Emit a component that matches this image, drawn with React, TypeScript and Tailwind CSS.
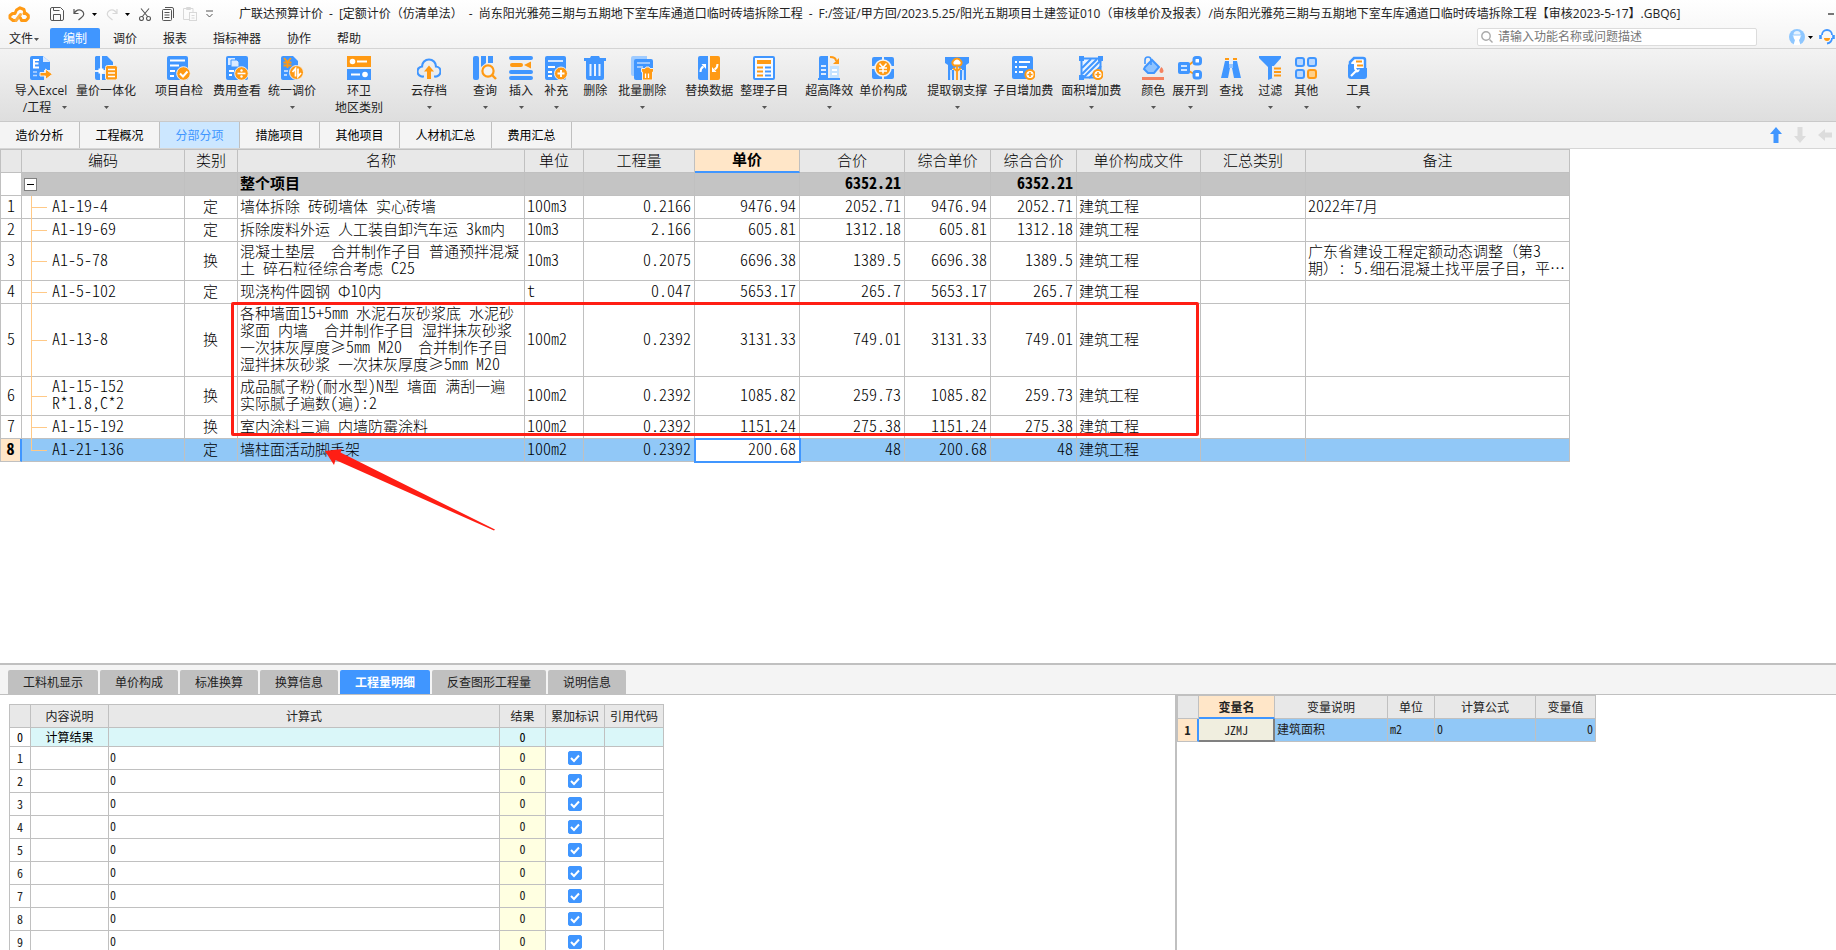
import type { ReactNode } from "react";
import { clsx } from "clsx";

const BLUE = "#4096ff";
const ORANGE = "#ff9a14";

/* ---------- small helpers ---------- */

// Grid text: latin runs are set in half-width glyphs so that digits line up.
function GridText({ text }: { text: string }) {
    const parts = text.split(/([\x20-\x7eΦ≥]+)/).filter(Boolean);
    return (
        <>
            {parts.map((part, i) =>
                /^[\x20-\x7eΦ≥]+$/.test(part) ? (
                    <span
                        key={i}
                        className="font-['Noto_Sans_CJK_SC',sans-serif] text-[16px] leading-3 [font-feature-settings:'hwid']"
                    >
                        {part}
                    </span>
                ) : (
                    <span key={i}>{part}</span>
                )
            )}
        </>
    );
}

function Caret({ className = "text-[#555]" }: { className?: string }) {
    return (
        <svg width="5" height="3" viewBox="0 0 5 3" className={className}>
            <path d="M0 0h5L2.5 3z" fill="currentColor" />
        </svg>
    );
}

function Icon({ children }: { children: ReactNode }) {
    return (
        <svg width="24" height="24" viewBox="0 0 24 24" fill="none">
            {children}
        </svg>
    );
}

/* ---------- ribbon icons ---------- */

const icons = {
    excel: (
        <Icon>
            <path d="M3 0h11l7 6v8h-6v10H3a2 2 0 0 1-2-2V2a2 2 0 0 1 2-2z" fill={BLUE} />
            <path d="M14 0v6h7z" fill="#dbeaff" />
            <path d="M10 4H5v7.500h5M5 7.500h4.500" stroke="#fff" strokeWidth="2" />
            <path d="M4 16h4M4 19.500h4" stroke="#b9d8ff" strokeWidth="1.500" />
            <path d="M11 16.500h5.500V13l7 5.200-7 5.300V20H11z" fill={ORANGE} stroke="#f0f0f0" />
        </Icon>
    ),
    integrate: (
        <Icon>
            <path d="M2 0h4v24H3a2 2 0 0 1-2-2V1zM8 0h5l6 6v8H8z" fill={BLUE} />
            <path d="M7 0v24M1 15h11" stroke="#eaf3ff" strokeWidth="2" />
            <rect x="4.500" y="12.500" width="5" height="5" fill="#fff" />
            <path d="M8 18h4v6H8z" fill={BLUE} />
            <rect x="11.500" y="9.500" width="12" height="14.500" rx="2" fill={ORANGE} stroke="#f0f0f0" />
            <path d="M14 13.500h7M14 17h7M14 20.500h7" stroke="#fff" strokeWidth="1.500" />
        </Icon>
    ),
    check: (
        <Icon>
            <rect x="0" y="0" width="21" height="24" rx="2" fill={BLUE} />
            <path d="M3 4.500h15M3 9.500h9M3 15h5M3 20h4" stroke="#fff" strokeWidth="1.800" />
            <circle cx="16.500" cy="17.500" r="6.800" fill={ORANGE} stroke="#f0f0f0" />
            <path d="m13 17.500 3 3 4.500-5" stroke="#fff" strokeWidth="2" />
        </Icon>
    ),
    fee: (
        <Icon>
            <rect x="1" y="0" width="22" height="24" rx="2" fill={BLUE} />
            <path d="M3 2h7v7H3z" fill="#dbeaff" />
            <path d="M6 4h6l2 2v5H6z" fill="#dbeaff" stroke={BLUE} />
            <path d="M4 15h5M4 19h3" stroke="#fff" strokeWidth="1.800" />
            <circle cx="16.500" cy="17.500" r="6.800" fill={ORANGE} stroke="#f0f0f0" />
            <path d="M12.500 17.500h8" stroke="#fff" strokeWidth="1.600" />
            <circle cx="16.500" cy="14.500" r="1.200" fill="#fff" />
            <circle cx="16.500" cy="20.500" r="1.200" fill="#fff" />
        </Icon>
    ),
    adjust: (
        <Icon>
            <path d="M3 0h10l5 5v19H3a2 2 0 0 1-2-2V2a2 2 0 0 1 2-2z" fill={BLUE} />
            <path d="m4 2 3.500 4L11 2M3.500 6.500h8M3.500 9.500h8M7.500 6v6" stroke={ORANGE} strokeWidth="1.800" />
            <path d="M4 15h4M4 19h3" stroke="#b9d8ff" strokeWidth="1.800" />
            <circle cx="16.500" cy="16.500" r="7" fill={ORANGE} stroke="#f0f0f0" />
            <path d="M15.500 20.500v-8l-3 3.500M18 12.500v8l3-3.500" stroke="#fff" strokeWidth="1.700" />
        </Icon>
    ),
    region: (
        <Icon>
            <path d="M0 0h24v11H0z" fill={ORANGE} />
            <path d="M0 13h24v11H0z" fill={BLUE} />
            <circle cx="5.500" cy="5.500" r="2.800" fill="#fff" />
            <path d="M10 5.500h10M4 18.500h9" stroke="#fff" strokeWidth="2" />
            <circle cx="18" cy="18.500" r="2.800" fill="#fff" />
        </Icon>
    ),
    cloud: (
        <Icon>
            <path
                d="M7 20.500H6A5 5 0 0 1 5 10.500a7 7 0 0 1 14 0 5 5 0 0 1-1 10h-1"
                stroke={BLUE}
                strokeWidth="2.200"
            />
            <path d="m12 9.500 5 6h-3V23h-4v-7.500H7z" fill={ORANGE} />
        </Icon>
    ),
    query: (
        <Icon>
            <rect x="0" y="0" width="6" height="24" rx="2" fill={BLUE} />
            <path d="M8 0h5v7l-5 4zM15 0h5v7h-5z" fill={BLUE} />
            <circle cx="15" cy="15" r="5.600" stroke={ORANGE} strokeWidth="2.200" fill="#f3f3f3" />
            <path d="m19 19 4 4" stroke={ORANGE} strokeWidth="2.400" />
        </Icon>
    ),
    insert: (
        <Icon>
            <path d="M2 2h20M2 16h20M2 22h20" stroke={BLUE} strokeWidth="4" strokeLinecap="round" />
            <path d="M3 9h9" stroke={ORANGE} strokeWidth="4" strokeLinecap="round" />
            <path d="m22 5.500-7 3.500 7 3.500z" fill={ORANGE} />
        </Icon>
    ),
    add: (
        <Icon>
            <rect x="1" y="0" width="21" height="24" rx="2" fill={BLUE} />
            <path d="M4 5h15" stroke="#fff" strokeWidth="1.500" />
            <path d="M4 11h7M4 16h4M4 20h4" stroke="#fff" strokeWidth="1.800" />
            <circle cx="17" cy="17.500" r="6.500" fill={ORANGE} stroke="#f0f0f0" />
            <path d="M13.500 17.500h7M17 14v7" stroke="#fff" strokeWidth="2" />
        </Icon>
    ),
    remove: (
        <Icon>
            <path d="M1 2h6l1-2h8l1 2h6v3H1zM3 5h18v17a2 2 0 0 1-2 2H5a2 2 0 0 1-2-2z" fill={BLUE} />
            <path d="M7.500 8v12M12 8v12M16.500 8v12" stroke="#e8f2ff" strokeWidth="2" />
        </Icon>
    ),
    batch: (
        <Icon>
            <path d="M3 0h14v20H3a2 2 0 0 1-2-2V2a2 2 0 0 1 2-2z" fill="#9fcbff" />
            <path d="M6 3h15a2 2 0 0 1 2 2v15l-5 4H6a2 2 0 0 1-2-2V5a2 2 0 0 1 2-2z" fill={BLUE} />
            <path d="M7 7h13M7 11h6" stroke="#b9d8ff" strokeWidth="1.500" />
            <path d="M11.500 12.500h3.500l1-1.500h3l1 1.500h3.500V16h-1v8h-10v-8h-1z" fill={ORANGE} stroke="#f0f0f0" />
            <path d="M15.500 17.500v4.500M18.500 17.500v4.500" stroke="#fff" strokeWidth="1.300" />
        </Icon>
    ),
    replace: (
        <Icon>
            <path d="M3 0h8v24H3a2 2 0 0 1-2-2V2a2 2 0 0 1 2-2z" fill={BLUE} />
            <path d="M13 0h8a2 2 0 0 1 2 2v20a2 2 0 0 1-2 2h-8z" fill={ORANGE} />
            <path d="M3.500 16c0-3 1-4.500 3-5.500M20.500 8c0 3-1 4.500-3 5.500" stroke="#fff" strokeWidth="2" />
            <path d="M4.500 8H9v5zM19.500 16H15v-5z" fill="#fff" />
        </Icon>
    ),
    organize: (
        <Icon>
            <rect x="2" y="1" width="20" height="22" rx="1" fill="#f6faff" stroke={BLUE} strokeWidth="2" />
            <path d="M5 6h14" stroke={ORANGE} strokeWidth="4" />
            <path d="M5 11.500h6M5 15.500h6M5 19.500h6" stroke={ORANGE} strokeWidth="1.800" />
            <path d="M13 11.500h6M13 15.500h6M13 19.500h6" stroke={BLUE} strokeWidth="1.800" />
        </Icon>
    ),
    highrise: (
        <Icon>
            <path d="M2 2a2 2 0 0 1 2-2h7v22H2z" fill={BLUE} />
            <path d="M4 10h5M4 14h5M4 18h5" stroke="#dbeaff" strokeWidth="2" />
            <path d="M13 10h9v12h-9z" fill="#c5e3ff" />
            <path d="M15 14h5M15 18h5" stroke="#fff" strokeWidth="2" />
            <path d="M1 23h22" stroke={BLUE} strokeWidth="2" />
            <path d="M13 1c4 0 6 1.500 6 4" stroke={ORANGE} strokeWidth="2" />
            <path d="M22 2v6h-6z" fill={ORANGE} />
        </Icon>
    ),
    price: (
        <Icon>
            <path d="M3 1h8v4l2 0V1h8a2 2 0 0 1 2 2v7h-3v3h3v8a2 2 0 0 1-2 2h-8v-4h-2v4H3a2 2 0 0 1-2-2v-8h3v-3H1V3a2 2 0 0 1 2-2z" fill={BLUE} />
            <circle cx="12" cy="12" r="8" fill={ORANGE} stroke="#f3f3f3" strokeWidth="1.500" />
            <path d="m8.500 7.500 3.500 4 3.500-4M8 12h8M8 15h8M12 11.500v6" stroke="#fff" strokeWidth="1.500" />
        </Icon>
    ),
    steel: (
        <Icon>
            <path d="M0 1h24v6l-3 2v15h-3l-1-10-4-3h-2l-4 3-1 10H3V9L0 7z" fill={BLUE} />
            <path d="M6 14v10M18 14v10" stroke="#eaf3ff" strokeWidth="1.500" />
            <path d="M7 13h10v11H7z" fill="#ececec" />
            <path d="M8 24V14M16 24V14" stroke={BLUE} strokeWidth="2" />
            <path d="M9 9.500a3 3 0 0 1-.5-5 4 4 0 0 1 7 0 3 3 0 0 1-.5 5z" fill="#fff" stroke={ORANGE} strokeWidth="2" />
            <path d="M12 10v14M8 12l4 3 4-3" stroke={ORANGE} strokeWidth="1.800" />
        </Icon>
    ),
    itemFee: (
        <Icon>
            <rect x="1" y="0" width="21" height="23" rx="2" fill={BLUE} />
            <path d="M4 6h2M8 6h11M4 11h2M8 11h8M4 16h2M8 16h4" stroke="#fff" strokeWidth="1.800" />
            <circle cx="19" cy="18.500" r="4.600" fill="#fff" stroke={ORANGE} strokeWidth="2" />
            <path d="M16.500 18.500h5M19 16v5" stroke={ORANGE} strokeWidth="1.600" />
        </Icon>
    ),
    areaFee: (
        <Icon>
            <rect x="2.500" y="2.500" width="19" height="19" fill="#e9f3ff" stroke={BLUE} strokeWidth="2" />
            <path d="M3 12 12 3M3 18 18 3M4 22 22 4M10 22 22 10" stroke={BLUE} strokeWidth="2" />
            <path d="M0 0h5v5H0zM19 0h5v5h-5zM0 19h5v5H0z" fill={BLUE} />
            <circle cx="19" cy="18.500" r="4.600" fill="#fff" stroke={ORANGE} strokeWidth="2" />
            <path d="M16.500 18.500h5M19 16v5" stroke={ORANGE} strokeWidth="1.600" />
        </Icon>
    ),
    paint: (
        <Icon>
            <path d="m4 11 7-7 7 7-5 6H7l-4-4z" fill="#8ec3ff" stroke={BLUE} strokeWidth="2" />
            <path d="M4 8V4a3 3 0 0 1 6 0v5" stroke={BLUE} strokeWidth="1.600" />
            <path d="M20.500 11c1.500 2 2 3 2 4a2 2 0 0 1-4 0c0-1 .5-2 2-4z" fill="#f5825f" />
            <path d="M1 22.500h22" stroke="#f5825f" strokeWidth="3" />
        </Icon>
    ),
    expand: (
        <Icon>
            <path d="M11 9l5-4M11 15l5 3" stroke={ORANGE} strokeWidth="1.800" />
            <rect x="0" y="6" width="12" height="12" rx="2" fill={BLUE} />
            <path d="M3 10h6M3 14h6" stroke="#cfe4ff" strokeWidth="2" />
            <rect x="16" y="1.500" width="6.500" height="6.500" rx="2" fill="#fff" stroke={BLUE} strokeWidth="3" />
            <rect x="16" y="15.500" width="6.500" height="6.500" rx="2" fill="#fff" stroke={BLUE} strokeWidth="3" />
        </Icon>
    ),
    find: (
        <Icon>
            <path d="M6 3h4M14 3h4" stroke={ORANGE} strokeWidth="2" />
            <path d="M6 5h4v3h4V5h4l4 17h-7l-2-10h-2L9 22H2z" fill={BLUE} />
            <path d="M11 3v9M13 3v9" stroke="#e6f1ff" />
        </Icon>
    ),
    filter: (
        <Icon>
            <path d="M1 0h22v2l-8 9v11l-5 2V11L1 2z" fill={BLUE} />
            <path d="M14 10h9v12h-9z" fill="#ececec" />
            <path d="M16 12.500h7M16 16h7M16 19.500h7" stroke={ORANGE} strokeWidth="2" />
        </Icon>
    ),
    other: (
        <Icon>
            <rect x="2" y="2" width="8" height="8" rx="2" fill="#b9d8ff" stroke={BLUE} strokeWidth="2" />
            <rect x="14" y="2" width="8" height="8" rx="2" fill="#b9d8ff" stroke={BLUE} strokeWidth="2" />
            <rect x="2" y="14" width="8" height="8" rx="2" fill="#b9d8ff" stroke={BLUE} strokeWidth="2" />
            <rect x="14" y="14" width="8" height="8" rx="2" fill="#ffd08a" stroke={ORANGE} strokeWidth="2" />
        </Icon>
    ),
    tools: (
        <Icon>
            <path d="M4 12V6l4-4h9a2 2 0 0 1 2 2v9" fill="#fff" stroke={BLUE} strokeWidth="2.500" />
            <path d="M10 5.500h6M11 9.500h6" stroke={ORANGE} strokeWidth="1.800" />
            <path d="M3 8h5v4h13v8a3 3 0 0 1-3 3H5a3 3 0 0 1-3-3V9z" fill={BLUE} />
            <path d="m5 20 5-5" stroke="#fff" strokeWidth="2.200" />
            <path d="M8 13c0-2 2-3 3.500-2.500L10 12l1.500 2 2-1c.5 2-1 3.500-3 3.500z" fill="#fff" />
        </Icon>
    ),
};

/* ---------- data ---------- */

type Tool = {
    icon: keyof typeof icons;
    label: string;
    sub?: string;
    menu?: boolean;
    space: string;
};

const tools: Tool[] = [
    { icon: "excel", label: "导入Excel", sub: "/工程", menu: true, space: "ml-[11px] w-[60px]" },
    { icon: "integrate", label: "量价一体化", menu: true, space: "ml-[5px]" },
    { icon: "check", label: "项目自检", space: "ml-[19px]" },
    { icon: "fee", label: "费用查看", space: "ml-[10px]" },
    { icon: "adjust", label: "统一调价", menu: true, space: "ml-[7px]" },
    { icon: "region", label: "环卫", sub: "地区类别", space: "ml-[19px]" },
    { icon: "cloud", label: "云存档", menu: true, space: "ml-[28px]" },
    { icon: "query", label: "查询", menu: true, space: "ml-[26px]" },
    { icon: "insert", label: "插入", menu: true, space: "ml-[12px]" },
    { icon: "add", label: "补充", menu: true, space: "ml-[11px]" },
    { icon: "remove", label: "删除", space: "ml-[15px]" },
    { icon: "batch", label: "批量删除", menu: true, space: "ml-[11px]" },
    { icon: "replace", label: "替换数据", space: "ml-[19px]" },
    { icon: "organize", label: "整理子目", menu: true, space: "ml-[7px]" },
    { icon: "highrise", label: "超高降效", menu: true, space: "ml-[17px]" },
    { icon: "price", label: "单价构成", space: "ml-[6px]" },
    { icon: "steel", label: "提取钢支撑", menu: true, space: "ml-[20px]" },
    { icon: "itemFee", label: "子目增加费", space: "ml-[6px]" },
    { icon: "areaFee", label: "面积增加费", menu: true, space: "ml-[8px]" },
    { icon: "paint", label: "颜色", menu: true, space: "ml-[20px]" },
    { icon: "expand", label: "展开到", menu: true, space: "ml-[7px]" },
    { icon: "find", label: "查找", space: "ml-[11px]" },
    { icon: "filter", label: "过滤", menu: true, space: "ml-[15px]" },
    { icon: "other", label: "其他", menu: true, space: "ml-[12px]" },
    { icon: "tools", label: "工具", menu: true, space: "ml-[28px]" },
];

const menus = ["编制", "调价", "报表", "指标神器", "协作", "帮助"];

const pages = ["造价分析", "工程概况", "分部分项", "措施项目", "其他项目", "人材机汇总", "费用汇总"];

const details = ["工料机显示", "单价构成", "标准换算", "换算信息", "工程量明细", "反查图形工程量", "说明信息"];

const columns = [
    { title: "", width: "w-[21px]" },
    { title: "编码", width: "w-[163px]" },
    { title: "类别", width: "w-[53px]" },
    { title: "名称", width: "w-[287px]" },
    { title: "单位", width: "w-[59px]" },
    { title: "工程量", width: "w-[111px]" },
    { title: "单价", width: "w-[105px]" },
    { title: "合价", width: "w-[105px]" },
    { title: "综合单价", width: "w-[86px]" },
    { title: "综合合价", width: "w-[86px]" },
    { title: "单价构成文件", width: "w-[124px]" },
    { title: "汇总类别", width: "w-[105px]" },
    { title: "备注", width: "w-[264px]" },
];

type Item = {
    code: string;
    kind: string;
    name: string;
    unit: string;
    qty: string;
    price: string;
    total: string;
    note?: string;
    height: string;
};

const items: Item[] = [
    { code: "A1-19-4", kind: "定", name: "墙体拆除 砖砌墙体 实心砖墙", unit: "100m3", qty: "0.2166", price: "9476.94", total: "2052.71", note: "2022年7月", height: "h-[23px]" },
    { code: "A1-19-69", kind: "定", name: "拆除废料外运 人工装自卸汽车运 3km内", unit: "10m3", qty: "2.166", price: "605.81", total: "1312.18", height: "h-[23px]" },
    { code: "A1-5-78", kind: "换", name: "混凝土垫层  合并制作子目 普通预拌混凝\n土 碎石粒径综合考虑 C25", unit: "10m3", qty: "0.2075", price: "6696.38", total: "1389.5", note: "广东省建设工程定额动态调整（第3\n期）: 5.细石混凝土找平层子目，平⋯", height: "h-[39px]" },
    { code: "A1-5-102", kind: "定", name: "现浇构件圆钢 Φ10内", unit: "t", qty: "0.047", price: "5653.17", total: "265.7", height: "h-[23px]" },
    { code: "A1-13-8", kind: "换", name: "各种墙面15+5mm 水泥石灰砂浆底 水泥砂\n浆面 内墙  合并制作子目 湿拌抹灰砂浆\n一次抹灰厚度≥5mm M20  合并制作子目\n湿拌抹灰砂浆 一次抹灰厚度≥5mm M20", unit: "100m2", qty: "0.2392", price: "3131.33", total: "749.01", height: "h-[73px]" },
    { code: "A1-15-152\nR*1.8,C*2", kind: "换", name: "成品腻子粉(耐水型)N型 墙面 满刮一遍\n实际腻子遍数(遍):2", unit: "100m2", qty: "0.2392", price: "1085.82", total: "259.73", height: "h-[39px]" },
    { code: "A1-15-192", kind: "换", name: "室内涂料三遍 内墙防霉涂料", unit: "100m2", qty: "0.2392", price: "1151.24", total: "275.38", height: "h-[23px]" },
    { code: "A1-21-136", kind: "定", name: "墙柱面活动脚手架", unit: "100m2", qty: "0.2392", price: "200.68", total: "48", height: "h-[23px]" },
];

/* ---------- header ---------- */

function QuickBar() {
    return (
        <div className="flex w-[239px] shrink-0 items-center text-[#555]">
            <svg className="ml-2" width="22" height="17" viewBox="0 0 22 17" fill="none" stroke={ORANGE} strokeWidth="3" strokeLinecap="round" strokeLinejoin="round">
                <path d="M7 14.500H5L2 12V9.500L4.500 7.500H7L8.500 4 12 1.800 16 3.500l1 4" />
                <path d="M8 14.500 12.500 8.500" stroke="#ffad3d" />
                <path d="M16 7.500h2l2.300 2V12L18 14.500h-4.500L12.500 12" />
            </svg>
            <button aria-label="保存" className="ml-5">
                <svg width="14" height="14" viewBox="0 0 14 14" fill="none" stroke="currentColor">
                    <path d="M.5 3V2A1.500 1.500 0 0 1 2 .5h8.500l3 3v8.500a1.500 1.500 0 0 1-1.500 1.500H2A1.500 1.500 0 0 1 .5 12z" />
                    <path d="M3.500.5v3h6M3.500 13V7.500h7V13" />
                </svg>
            </button>
            <button aria-label="撤销" className="ml-[9px]">
                <svg width="12" height="13" viewBox="0 0 12 13" fill="none" stroke="currentColor" strokeWidth="1.200">
                    <path d="M1 1v4.500h4.500M1 5.500C3 2 6 1 8.500 2.500c3 2 3 5 0 7L5.500 12" />
                </svg>
            </button>
            <button aria-label="撤销列表" className="ml-[7px]">
                <Caret className="text-black" />
            </button>
            <button aria-label="重做" className="ml-[9px] text-[#d8d8d8]">
                <svg width="12" height="13" viewBox="0 0 12 13" fill="none" stroke="currentColor" strokeWidth="1.200">
                    <path d="M11 1v4.500H6.500M11 5.500C9 2 6 1 3.500 2.500c-3 2-3 5 0 7L6.500 12" />
                </svg>
            </button>
            <button aria-label="重做列表" className="ml-[7px]">
                <Caret className="text-black" />
            </button>
            <button aria-label="剪切" className="ml-[9px]">
                <svg width="12" height="13" viewBox="0 0 12 13" fill="none" stroke="currentColor" strokeWidth="1.100">
                    <path d="M2 .5 9 9M10 .5 3 9" />
                    <circle cx="2.500" cy="10.500" r="2" />
                    <circle cx="9.500" cy="10.500" r="2" />
                </svg>
            </button>
            <button aria-label="复制" className="ml-[11px]">
                <svg width="12" height="14" viewBox="0 0 12 14" fill="none" stroke="currentColor">
                    <path d="M3 .5h7A1.500 1.500 0 0 1 11.500 2v9" />
                    <rect x=".5" y="2.500" width="9" height="11" rx="1" />
                    <path d="M2.500 5.500h5M2.500 8h5M2.500 10.500h5" />
                </svg>
            </button>
            <button aria-label="粘贴" className="ml-[9px] text-[#d8d8d8]">
                <svg width="14" height="14" viewBox="0 0 14 14" fill="none" stroke="currentColor">
                    <path d="M6 12.500H.5v-11H10V5M3.500.5h4v2h-4z" />
                    <rect x="6.500" y="5.500" width="7" height="8" />
                    <path d="M8.500 8.500h3M8.500 11h3" />
                </svg>
            </button>
            <button aria-label="更多" className="ml-[9px]">
                <svg width="7" height="8" viewBox="0 0 7 8" fill="none" stroke="currentColor">
                    <path d="M0 1h7M.5 4l3 3 3-3" />
                </svg>
            </button>
        </div>
    );
}

function Header() {
    return (
        <header className="bg-linear-to-b from-white to-[#f3f3f3]">
            <div className="flex h-7 items-center">
                <QuickBar />
                <h1 className="flex flex-1 gap-1.5 whitespace-nowrap">
                    <span>广联达预算计价</span>
                    <span>-</span>
                    <span>[定额计价（仿清单法）</span>
                    <span>-</span>
                    <span>尚东阳光雅苑三期与五期地下室车库通道口临时砖墙拆除工程</span>
                    <span>-</span>
                    <span>
                        F:/签证/甲方回/2023.5.25/阳光五期项目土建签证010（审核单价及报表）/尚东阳光雅苑三期与五期地下室车库通道口临时砖墙拆除工程【审核2023-5-17】.GBQ6]
                    </span>
                </h1>
                <button aria-label="最小化" className="mr-0.5 h-0.5 w-1.5 bg-[#777]" />
            </div>
            <div className="flex h-[21px] border-b border-[#d4d4d4]">
                <button className="flex w-[50px] items-center gap-px pt-0.5 pl-[9px]">
                    文件
                    <Caret />
                </button>
                {menus.map((menu, i) => (
                    <button
                        key={menu}
                        className={clsx("px-[13px] pt-0.5", i === 0 && "rounded-t-xs bg-[#4096ff] text-white")}
                    >
                        {menu}
                    </button>
                ))}
                <label className="ml-auto flex h-[18px] w-[280px] items-center rounded-xs border border-[#dcdcdc] bg-white pl-[3px]">
                    <svg width="12" height="12" viewBox="0 0 12 12" fill="none" stroke="#aaa" strokeWidth="1.400">
                        <circle cx="5" cy="5" r="4.200" />
                        <path d="m8.500 8.500 3 3" />
                    </svg>
                    <input
                        aria-label="搜索"
                        placeholder="请输入功能名称或问题描述"
                        className="ml-[5px] h-4 flex-1 bg-transparent outline-none placeholder:text-[#777]"
                    />
                </label>
                <div className="ml-8 flex h-[18px] items-center">
                    <button aria-label="账户">
                        <svg width="16" height="16" viewBox="0 0 16 16">
                            <circle cx="8" cy="8" r="8" fill="#8ec7ff" />
                            <path d="M3.500 6.500h9l-1 1c0 2-1 3-1.500 3.500l1.500 5h-7L6 11C5.500 10.500 4.500 9.500 4.500 7.500z" fill="#fff" />
                            <path d="M4.500 5.500a3.500 3.500 0 0 1 7 0z" fill="#e6f3ff" />
                        </svg>
                    </button>
                    <span className="ml-[3px]">
                        <Caret className="text-black" />
                    </span>
                    <button aria-label="客服" className="mr-px ml-[6px]">
                        <svg width="16" height="16" viewBox="0 0 16 16" fill="none">
                            <path d="M3 6a5 5 0 0 1 10 0M13 9c0 3-2 5-5 5.500" stroke={BLUE} strokeWidth="1.800" />
                            <path d="M1.500 6v4M14.500 6v4" stroke={BLUE} strokeWidth="2.600" />
                            <path d="M5 9h6a3 3 0 0 1-6 0z" fill={ORANGE} />
                        </svg>
                    </button>
                </div>
            </div>
        </header>
    );
}

function Ribbon() {
    return (
        <div className="flex h-[73px] items-start border-b border-[#c9c9c9] bg-linear-to-b from-[#f3f3f3] to-[#dedede] pt-[7px]">
            {tools.map((tool) => (
                <button key={tool.label} className={clsx("flex shrink-0 flex-col items-center", tool.space)}>
                    {icons[tool.icon]}
                    <span className="mt-[3px] leading-4 whitespace-nowrap">{tool.label}</span>
                    <span className="flex h-[17px] items-center gap-[11px] leading-[17px] whitespace-nowrap">
                        {tool.sub && <span className={clsx(tool.menu && "ml-2")}>{tool.sub}</span>}
                        {tool.menu && <Caret />}
                    </span>
                </button>
            ))}
        </div>
    );
}

function PageTabs() {
    return (
        <nav className="flex h-[27px] border-b border-[#d6d6d6] bg-[#f4f4f4]">
            {pages.map((page, i) => (
                <button
                    key={page}
                    className={clsx(
                        "border-r border-[#c0c0c0] pt-0.5 text-center",
                        i === 5 ? "w-[92px]" : "w-20",
                        i === 2 ? "bg-[#cce7ff] text-[#4096ff]" : "text-black"
                    )}
                >
                    {page}
                </button>
            ))}
            <div className="mr-1 ml-auto flex items-center gap-3">
                <button aria-label="上移">
                    <svg width="12" height="16" viewBox="0 0 12 16">
                        <path d="m6 0 6 7H8.500v9h-5V7H0z" fill={BLUE} />
                    </svg>
                </button>
                <button aria-label="下移">
                    <svg width="12" height="16" viewBox="0 0 12 16">
                        <path d="m6 16 6-7H8.500V0h-5v9H0z" fill="#dcdcdc" />
                    </svg>
                </button>
                <button aria-label="左移">
                    <svg width="14" height="12" viewBox="0 0 14 12">
                        <path d="m0 6 7-6v3.500h7v5H7V12z" fill="#dcdcdc" />
                    </svg>
                </button>
            </div>
        </nav>
    );
}

/* ---------- main grid ---------- */

function TreeLine({ last }: { last: boolean }) {
    return (
        <>
            <span className={clsx("absolute top-0 left-[9px] w-px bg-[#ffc987]", last ? "h-1/2" : "-bottom-px")} />
            <span className="absolute top-1/2 left-[9px] h-px w-4 bg-[#ffc987]" />
        </>
    );
}

const cell = "border-r border-b border-[#c0c0c0] pt-0 pr-[3px] pb-0.5 pl-0.5";

function MainGrid() {
    return (
        <table className="w-[1570px] table-fixed border-separate border-spacing-0 border-t border-l border-[#c0c0c0] font-['Liberation_Sans','Noto_Sans_CJK_SC',sans-serif] text-[15px] leading-[17px] font-light text-black">
            <colgroup>
                {columns.map((column, i) => (
                    <col key={i} className={column.width} />
                ))}
            </colgroup>
            <thead>
                <tr className="h-[23px] bg-[#e8e8e8]">
                    {columns.map((column, i) => (
                        <th
                            key={i}
                            className={clsx(
                                "border-r border-[#c0c0c0] p-0 pb-0.5",
                                column.title === "单价"
                                    ? "border-b-2 border-b-[#4096ff] bg-[#ffe6c8] font-bold"
                                    : "border-b font-light"
                            )}
                        >
                            {column.title}
                        </th>
                    ))}
                </tr>
            </thead>
            <tbody>
                <tr className="h-[23px] bg-[#c4c4c4] font-bold">
                    <td className={clsx(cell, "bg-white")} />
                    <td className="border-r border-b border-[#c0c0c0] p-0 pl-[2px]">
                        <button aria-label="折叠" className="flex size-[13px] items-center justify-center border border-[#808080] bg-white">
                            <span className="h-px w-[7px] bg-black" />
                        </button>
                    </td>
                    <td className={cell} />
                    <td className={cell}>整个项目</td>
                    <td className={cell} />
                    <td className={cell} />
                    <td className={cell} />
                    <td className={clsx(cell, "text-right")}>
                        <GridText text="6352.21" />
                    </td>
                    <td className={cell} />
                    <td className={clsx(cell, "text-right")}>
                        <GridText text="6352.21" />
                    </td>
                    <td className={cell} />
                    <td className={cell} />
                    <td className={cell} />
                </tr>
                {items.map((item, i) => {
                    const selected = i === items.length - 1;
                    return (
                        <tr key={item.code} className={clsx(item.height, selected && "bg-[#91c8f7]")}>
                            <td
                                className={clsx(
                                    "border-b border-[#c0c0c0] p-0 pb-0.5 text-center",
                                    selected ? "border-r-2 border-r-[#4096ff] bg-[#ffe6c8] font-bold" : "border-r"
                                )}
                            >
                                <GridText text={String(i + 1)} />
                            </td>
                            <td className="relative border-r border-b border-[#c0c0c0] p-0 pb-0.5 pl-[30px] whitespace-pre">
                                <TreeLine last={selected} />
                                <GridText text={item.code} />
                            </td>
                            <td className={clsx(cell, "text-center")}>{item.kind}</td>
                            <td className={clsx(cell, "whitespace-pre")}>
                                <GridText text={item.name} />
                            </td>
                            <td className={cell}>
                                <GridText text={item.unit} />
                            </td>
                            <td className={clsx(cell, "text-right")}>
                                <GridText text={item.qty} />
                            </td>
                            <td
                                className={clsx(
                                    cell,
                                    "text-right",
                                    selected && "bg-white outline-2 -outline-offset-1 outline-[#4096ff]"
                                )}
                            >
                                <GridText text={item.price} />
                            </td>
                            <td className={clsx(cell, "text-right")}>
                                <GridText text={item.total} />
                            </td>
                            <td className={clsx(cell, "text-right")}>
                                <GridText text={item.price} />
                            </td>
                            <td className={clsx(cell, "text-right")}>
                                <GridText text={item.total} />
                            </td>
                            <td className={cell}>建筑工程</td>
                            <td className={cell} />
                            <td className={clsx(cell, "whitespace-pre")}>
                                <GridText text={item.note ?? ""} />
                            </td>
                        </tr>
                    );
                })}
            </tbody>
        </table>
    );
}

/* ---------- detail pane ---------- */

const half = "[font-feature-settings:'hwid']";

function QuantityTable() {
    const line = "border-r border-b border-[#c0c0c0] px-0 py-0";
    return (
        <table className="w-[655px] table-fixed border-separate border-spacing-0 border-t border-l border-[#c0c0c0] text-center">
            <colgroup>
                <col className="w-[21px]" />
                <col className="w-[78px]" />
                <col className="w-[391px]" />
                <col className="w-[46px]" />
                <col className="w-[59px]" />
                <col className="w-[59px]" />
            </colgroup>
            <thead>
                <tr className="h-[23px] bg-[#e8e8e8]">
                    {["", "内容说明", "计算式", "结果", "累加标识", "引用代码"].map((title) => (
                        <th key={title} className={clsx(line, "font-normal")}>
                            {title}
                        </th>
                    ))}
                </tr>
            </thead>
            <tbody className={half}>
                <tr className="h-[19px] bg-[#daf7f9] text-black">
                    <td className={clsx(line, "bg-white")}>0</td>
                    <td className={line}>计算结果</td>
                    <td className={line} />
                    <td className={line}>0</td>
                    <td className={line} />
                    <td className={line} />
                </tr>
                {[1, 2, 3, 4, 5, 6, 7, 8, 9].map((row) => (
                    <tr key={row} className="h-[23px]">
                        <td className={line}>{row}</td>
                        <td className={line} />
                        <td className={clsx(line, "pb-0.5 text-left")}>
                            <span className="pl-px">0</span>
                        </td>
                        <td className={clsx(line, "bg-[#ffffe1] pb-0.5")}>0</td>
                        <td className={line}>
                            <label className="relative mx-auto block size-3.5">
                                <input
                                    type="checkbox"
                                    defaultChecked
                                    aria-label={`累加标识 ${row}`}
                                    className="peer block size-3.5 appearance-none rounded-xs border border-[#4096ff] bg-white checked:bg-[#4096ff]"
                                />
                                <svg className="pointer-events-none absolute inset-0" width="14" height="14" viewBox="0 0 14 14" fill="none">
                                    <path d="m3 7 3 3 5-5.500" stroke="#fff" strokeWidth="2" />
                                </svg>
                            </label>
                        </td>
                        <td className={line} />
                    </tr>
                ))}
            </tbody>
        </table>
    );
}

function VariableTable() {
    const line = "border-r border-b border-[#c0c0c0] px-0.5 pt-0 pb-0.5";
    return (
        <table className="w-[419px] table-fixed border-separate border-spacing-0 border-t border-l border-[#c0c0c0]">
            <colgroup>
                <col className="w-[21px]" />
                <col className="w-[76px]" />
                <col className="w-[113px]" />
                <col className="w-[47px]" />
                <col className="w-[101px]" />
                <col className="w-[60px]" />
            </colgroup>
            <thead>
                <tr className="h-[23px] bg-[#e8e8e8]">
                    {["", "变量名", "变量说明", "单位", "计算公式", "变量值"].map((title, i) => (
                        <th
                            key={title}
                            className={clsx(
                                "border-r border-[#c0c0c0] p-0",
                                i === 1 ? "border-b-2 border-b-[#4096ff] bg-[#ffe6c8] font-bold" : "border-b font-normal"
                            )}
                        >
                            {title}
                        </th>
                    ))}
                </tr>
            </thead>
            <tbody className={half}>
                <tr className="h-[23px] bg-[#91c8f7]">
                    <td className="border-r-2 border-b border-r-[#4096ff] border-b-[#c0c0c0] bg-[#ffe6c8] p-0 text-center font-bold">1</td>
                    <td className="border-r-2 border-b-2 border-[#808080] bg-[#f0eedf] p-0 text-center">JZMJ</td>
                    <td className={line}>建筑面积</td>
                    <td className={line}>m2</td>
                    <td className={line}>0</td>
                    <td className={clsx(line, "text-right")}>0</td>
                </tr>
            </tbody>
        </table>
    );
}

function DetailPane() {
    return (
        <section className="flex min-h-0 flex-[287] flex-col font-['Noto_Sans_CJK_SC',sans-serif]">
            <nav className="flex h-8 shrink-0 items-end gap-0.5 border-t-2 border-b border-[#c0c0c0] bg-[#f4f4f4] pl-2">
                {details.map((tab, i) => (
                    <button
                        key={tab}
                        className={clsx(
                            "h-6 rounded-t-xs px-[15px]",
                            i === 4 ? "bg-[#4096ff] font-bold text-white" : "bg-[#c0c0c0]"
                        )}
                    >
                        {tab}
                    </button>
                ))}
            </nav>
            <div className="flex min-h-0 flex-1 overflow-hidden">
                <div className="min-w-0 flex-[1175]">
                    <div className="pt-[9px] pl-[9px]">
                        <QuantityTable />
                    </div>
                </div>
                <div className="min-w-0 flex-[659] border-l-2 border-[#c0c0c0]">
                    <VariableTable />
                </div>
            </div>
        </section>
    );
}

export default function App() {
    return (
        <div className="flex h-screen flex-col overflow-hidden bg-white font-['Open_Sans','Noto_Sans_CJK_SC',sans-serif] text-xs text-[#222]">
            <Header />
            <Ribbon />
            <PageTabs />
            <main className="relative min-h-0 flex-[514] overflow-hidden">
                <MainGrid />
                {/* review marks drawn over the grid */}
                <div className="pointer-events-none absolute top-[153px] left-[231px] h-[134px] w-[968px] rounded-xs border-3 border-[#ff1e14]" />
                <svg className="pointer-events-none absolute top-[299px] left-[324px]" width="172" height="84" viewBox="0 0 172 84">
                    <path d="M1 3 18 1l-1.500 3.500L171 81.500l-1 1L11.500 12 10 17z" fill="#ff1e14" />
                </svg>
            </main>
            <DetailPane />
        </div>
    );
}
